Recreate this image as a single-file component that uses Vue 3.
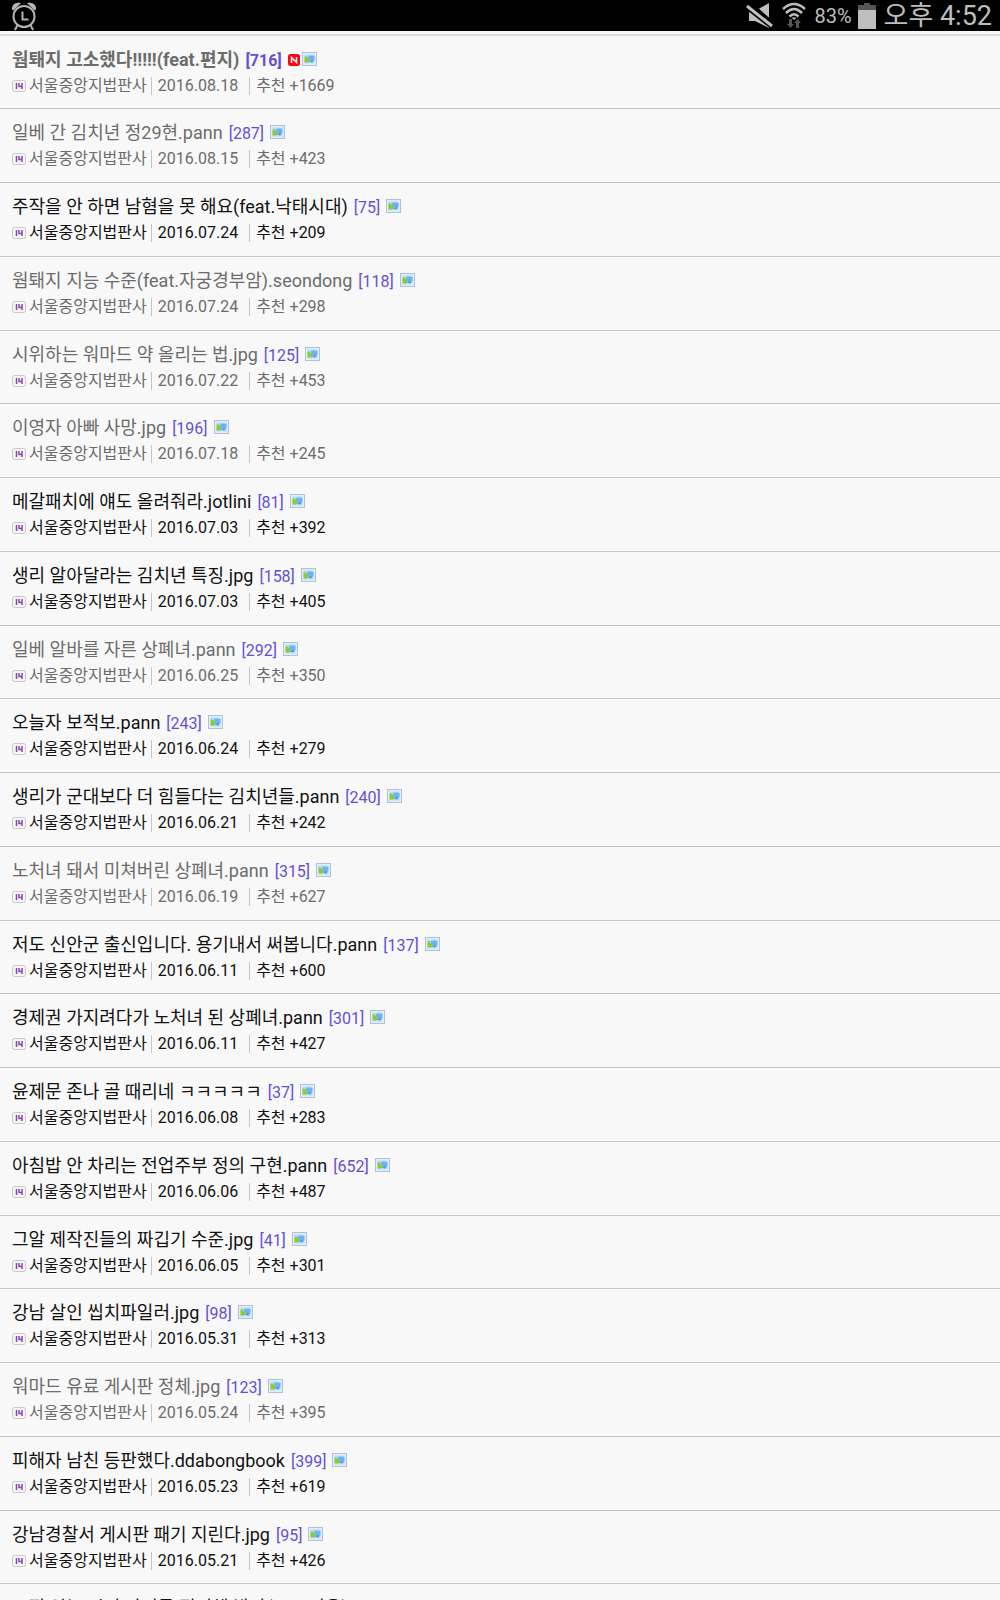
<template>
  <div class="screen">
    <header class="status-bar">
      <svg class="alarm" viewBox="0 0 26 30" width="26" height="30">
        <g fill="#b4b4b4">
          <path d="M1 8.500C0.500 4 4 0.500 10 2L2.500 9.500Z" />
          <path d="M25 8.500C25.500 4 22 0.500 16 2L23.500 9.500Z" />
        </g>
        <g fill="none" stroke="#b4b4b4">
          <circle cx="13" cy="15.500" r="10.500" stroke-width="2" />
          <path d="M11.500 10.500v8h6" stroke-width="2" />
          <path d="M6.500 24l-2.500 5M19.500 24l2.500 5" stroke-width="2" />
        </g>
      </svg>
      <div class="indicators">
        <svg class="mute" viewBox="0 0 28 27" width="28" height="27">
          <path d="M3 9h6L23 1v25L9 19H3z" fill="#bebebe" />
          <path d="M2 1L28 24" stroke="#000" stroke-width="6" />
          <path d="M1 3L27 23M1 7L24 25" stroke="#000" stroke-width="2" />
          <path d="M1 4L26 24" stroke="#bebebe" stroke-width="3" />
        </svg>
        <svg class="wifi" viewBox="0 0 24 27" width="24" height="27">
          <g fill="none" stroke="#bebebe" stroke-width="2.500">
            <path d="M1 7Q12 -3 23 7" />
            <path d="M4 11Q12 3 20 11" />
            <path d="M7.500 14.500Q12 10 16.500 14.500" />
          </g>
          <path d="M9.500 15.500h5L12 18z" fill="#bebebe" />
          <path d="M7 17h3v5h2l-3.500 4L5 22h2zM14 26v-5h-2l3.500-4 3.500 4h-2v5z" fill="#555" />
        </svg>
        <span class="percent">83%</span>
        <svg class="battery" viewBox="0 0 18 27" width="18" height="27">
          <path d="M6 1h6v2h6v5H0V3h6z" fill="#555" />
          <path d="M0 8h18v19H0z" fill="#bebebe" />
        </svg>
        <span class="clock">오후 4:52</span>
      </div>
    </header>

    <ul class="post-list">
      <li v-for="post in posts" :key="post.title" class="post" :class="{ read: post.read, current: post.isNew }">
        <a href="#" class="title">
          <span class="subject">{{ post.title }}</span>
          <span class="count">[{{ post.count }}]</span>
          <span class="icons">
            <svg v-if="post.isNew" class="new" viewBox="0 0 12 12" width="12" height="12">
              <rect width="12" height="12" rx="2.500" fill="#fa0510" />
              <path d="M3.500 9V3.500L8.500 8.500V3" fill="none" stroke="#fff" stroke-width="1.500" />
            </svg>
            <svg class="photo" viewBox="0 0 15 14" width="15" height="14">
              <rect x="0.500" y="0.500" width="14" height="13" fill="#e4eefb" stroke="#b0c0d8" />
              <rect x="2.500" y="2.500" width="10" height="9" fill="#b5dcfb" />
              <path d="M6 4q3-1 6.500 0v4l-3 1-3.500-2z" fill="#69b4f8" />
              <path d="M2.500 4.500l2 0 1.500 2 2 1-0.500 2-2 1-3 0z" fill="#8fcb2c" />
              <path d="M7 9.500l2-1.500 3 0.500-2 2z" fill="#4a9bf0" />
            </svg>
          </span>
        </a>
        <div class="meta">
          <svg class="level" viewBox="0 0 14 12" width="14" height="12">
            <rect x="0.500" y="0.500" width="13" height="11" rx="2" fill="#f7f4f8" stroke="#cbc6cd" />
            <path d="M4.500 3v6M7 3v3.500h3.500M10 3v6" fill="none" stroke="#8648a8" stroke-width="1.500" />
          </svg>
          <span class="author">서울중앙지법판사</span>
          <span class="date">{{ post.date }}</span>
          <span class="votes">추천 +{{ post.votes }}</span>
        </div>
      </li>
    </ul>
  </div>
</template>

<script setup>
const posts = [
  { title: '웜퇘지 고소했다!!!!!(feat.편지)', count: 716, date: '2016.08.18', votes: 1669, read: true, isNew: true },
  { title: '일베 간 김치년 정29현.pann', count: 287, date: '2016.08.15', votes: 423, read: true },
  { title: '주작을 안 하면 남혐을 못 해요(feat.낙태시대)', count: 75, date: '2016.07.24', votes: 209 },
  { title: '웜퇘지 지능 수준(feat.자궁경부암).seondong', count: 118, date: '2016.07.24', votes: 298, read: true },
  { title: '시위하는 워마드 약 올리는 법.jpg', count: 125, date: '2016.07.22', votes: 453, read: true },
  { title: '이영자 아빠 사망.jpg', count: 196, date: '2016.07.18', votes: 245, read: true },
  { title: '메갈패치에 얘도 올려줘라.jotlini', count: 81, date: '2016.07.03', votes: 392 },
  { title: '생리 알아달라는 김치년 특징.jpg', count: 158, date: '2016.07.03', votes: 405 },
  { title: '일베 알바를 자른 상폐녀.pann', count: 292, date: '2016.06.25', votes: 350, read: true },
  { title: '오늘자 보적보.pann', count: 243, date: '2016.06.24', votes: 279 },
  { title: '생리가 군대보다 더 힘들다는 김치년들.pann', count: 240, date: '2016.06.21', votes: 242 },
  { title: '노처녀 돼서 미쳐버린 상폐녀.pann', count: 315, date: '2016.06.19', votes: 627, read: true },
  { title: '저도 신안군 출신입니다. 용기내서 써봅니다.pann', count: 137, date: '2016.06.11', votes: 600 },
  { title: '경제권 가지려다가 노처녀 된 상폐녀.pann', count: 301, date: '2016.06.11', votes: 427 },
  { title: '윤제문 존나 골 때리네 ㅋㅋㅋㅋㅋ', count: 37, date: '2016.06.08', votes: 283 },
  { title: '아침밥 안 차리는 전업주부 정의 구현.pann', count: 652, date: '2016.06.06', votes: 487 },
  { title: '그알 제작진들의 짜깁기 수준.jpg', count: 41, date: '2016.06.05', votes: 301 },
  { title: '강남 살인 씹치파일러.jpg', count: 98, date: '2016.05.31', votes: 313 },
  { title: '워마드 유료 게시판 정체.jpg', count: 123, date: '2016.05.24', votes: 395, read: true },
  { title: '피해자 남친 등판했다.ddabongbook', count: 399, date: '2016.05.23', votes: 619 },
  { title: '강남경찰서 게시판 패기 지린다.jpg', count: 95, date: '2016.05.21', votes: 426 },
  { title: '느낌 있는 시민 사진들 정리해 봤다(feat.서울)', count: 88, date: '2016.05.20', votes: 310 }
]
</script>

<style>
body {
  margin: 0;
  background: #f8f8f8;
}
</style>

<style scoped>
.screen {
  height: 100vh;
  overflow: hidden;
  font-family: Roboto, 'Noto Sans CJK KR', sans-serif;
}

.status-bar {
  display: flex;
  justify-content: space-between;
  height: 31px;
  padding: 0 8px 0 11px;
  background: #000;
  color: #bebebe;
}

.alarm {
  margin-top: 1px;
}

.indicators {
  display: flex;
  align-items: center;
}

.wifi {
  margin: 0 8px;
}

.percent {
  font-size: 20px;
  line-height: 30px;
}

.battery {
  margin: 0 8px 0 6px;
}

.clock {
  font-size: 27px;
  line-height: 32px;
}

.post-list {
  margin: 3px 0 0;
  padding: 0;
  list-style: none;
  border-top: 2px solid #dedad4;
}

.post {
  box-sizing: border-box;
  height: 74px;
  padding: 11px 12px 0;
  border-bottom: 1px solid #c9c6bc;
  color: #111;
}

/* 295px for every four rows */
.post:nth-child(4n + 1) {
  height: 73px;
}

.post.read {
  color: #6c6c6c;
}

.title {
  display: flex;
  align-items: baseline;
  gap: 6px;
  height: 26px;
  color: inherit;
  font-size: 18px;
  line-height: 26px;
  text-decoration: none;
}

.current .title {
  font-weight: bold;
}

.count {
  color: #6450d2;
  font-size: 16px;
}

.icons {
  display: flex;
  align-items: flex-end;
  gap: 2px;
}

.meta {
  display: flex;
  align-items: center;
  font-size: 16px;
  line-height: 26px;
}

.level {
  margin-right: 3px;
}

.date,
.votes {
  display: flex;
  align-items: center;
}

.date::before,
.votes::before {
  content: '';
  width: 1px;
  height: 18px;
  margin: 0 6px 0 4px;
  background: #c4c4c4;
}

.votes::before {
  margin-left: 11px;
}
</style>
